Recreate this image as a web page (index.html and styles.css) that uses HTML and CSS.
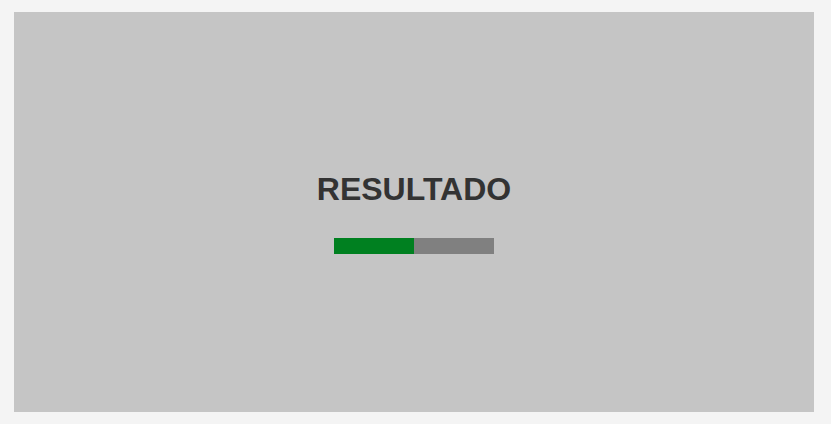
FILE: index.html
```html
<!DOCTYPE html>
<html>
<head>
<meta charset="utf-8">
<link rel="stylesheet" href="styles.css">
</head>
<body>
<div class="panel">
  <h1 class="title">RESULTADO</h1>
  <div class="bar"><div class="fill"></div></div>
</div>
</body>
</html>
```
FILE: styles.css
```css
html, body {
  margin: 0;
  background: #f4f4f4;
}
body {
  padding: 12px 0 0 14px;
  font-family: "Liberation Sans", Arial, sans-serif;
}
.panel {
  width: 800px;
  height: 400px;
  background: #c5c5c5;
  display: flex;
  flex-direction: column;
  align-items: center;
  justify-content: center;
}
.title {
  margin: 0 0 30px 0;
  font-size: 32px;
  line-height: 37px;
  font-weight: bold;
  color: #333333;
}
.bar {
  width: 160px;
  height: 16px;
  background: #808080;
  display: flex;
}
.fill {
  width: 50%;
  background: #008020;
}
```
